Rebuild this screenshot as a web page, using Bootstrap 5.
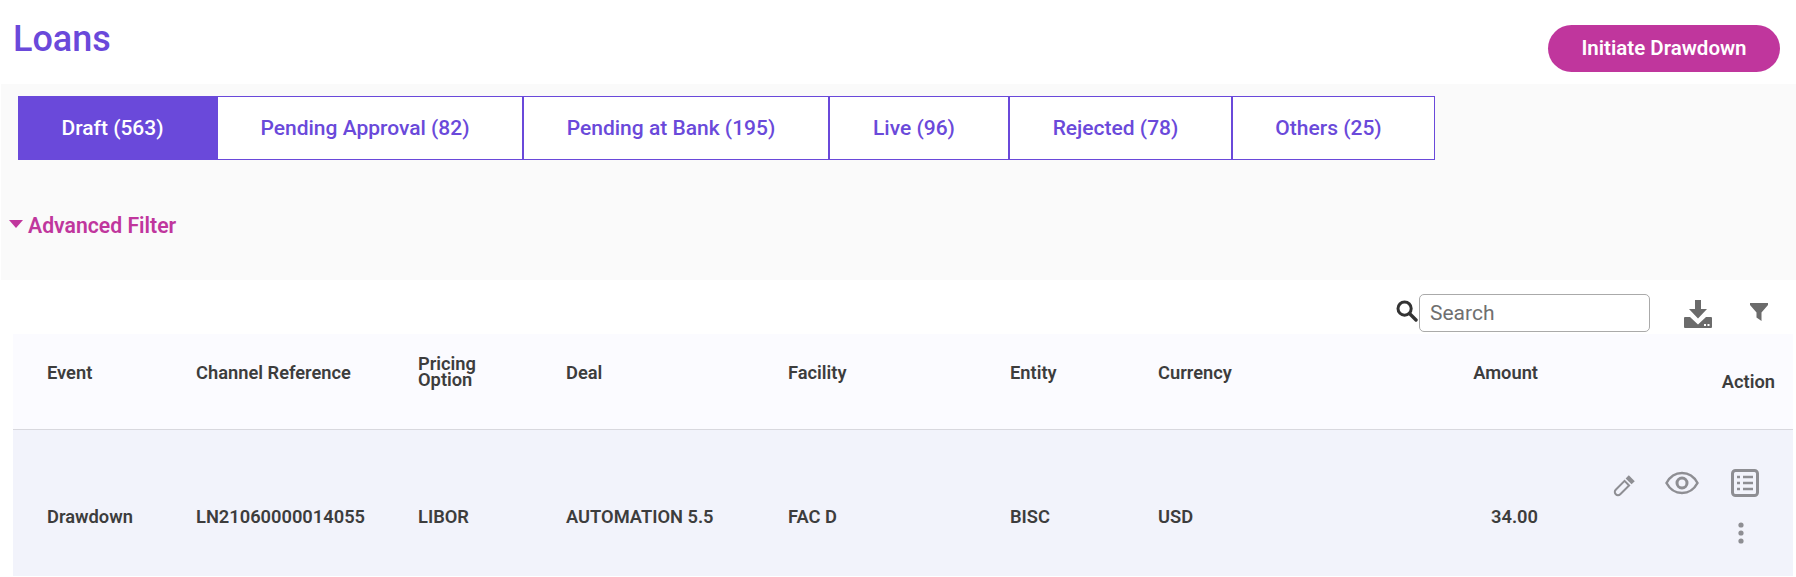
<!DOCTYPE html>
<html lang="en">
<head>
    <meta charset="UTF-8">
    <title>Loans</title>
    <link href="https://cdn.jsdelivr.net/npm/bootstrap@5.3.0/dist/css/bootstrap.min.css" rel="stylesheet">
    <style>
        body {
            font-family: Roboto, "Liberation Sans", sans-serif;
            background-color: #fff;
            color: #3d3d3d;
            height: 577px;
            overflow: hidden;
        }
        .page-head {
            height: 84px;
            padding: 19px 16px 0 13px;
        }
        .page-title {
            color: #6a49da;
            font-size: 36px;
            font-weight: 500;
            line-height: 40px;
            margin: 0;
        }
        .btn-drawdown {
            background-color: #c0369d;
            color: #fff;
            border: 0;
            border-radius: 24px;
            width: 232px;
            height: 47px;
            margin-top: 6px;
            font-size: 20.500px;
            font-weight: 600;
            padding: 0;
        }
        .btn-drawdown:hover { background-color: #c0369d; color: #fff; }
        .filter-band {
            background-color: #fafafa;
            height: 196px;
            margin-left: 1px;
            padding: 12px 0 0 17px;
        }
        .tab-strip { height: 64px; }
        .tab-item {
            display: flex;
            align-items: center;
            justify-content: center;
            height: 64px;
            border: 1px solid #6a49da;
            padding: 2px 10px 0 0;
            background-color: #fff;
            color: #6a49da;
            font-size: 21px;
            font-weight: 500;
            text-decoration: none;
        }
        .tab-item.is-active { background-color: #6a49da; color: #fff; }
        .w-draft { width: 199px; }
        .w-approval { width: 306px; }
        .w-bank { width: 306px; }
        .w-live { width: 180px; }
        .w-rejected { width: 223px; }
        .w-others { width: 203px; }
        .adv-filter {
            margin: 53px 0 0 -9px;
            color: #c0369d;
            font-size: 21.200px;
            font-weight: 600;
            line-height: 26px;
            gap: 5px;
        }
        .adv-caret {
            width: 0;
            height: 0;
            border-left: 7px solid transparent;
            border-right: 7px solid transparent;
            border-top: 8px solid #c0369d;
            margin-top: -4px;
        }
        .tool-row {
            height: 54px;
            padding: 14px 0 0 0;
        }
        .search-box {
            width: 231px;
            height: 38px;
            border: 1px solid #aaa;
            border-radius: 5px;
            padding: 0 10px;
            font-size: 21px;
            color: #3d3d3d;
            background: #fff;
            margin-left: 1px;
        }
        .search-box::placeholder { color: #6f6f6f; }
        .tool-search { margin-top: 6px; }
        .tool-download { margin: 6px 0 0 34px; }
        .tool-filter { margin: 9px 28px 0 38px; }
        .loan-grid {
            table-layout: fixed;
            border-collapse: collapse;
            width: 1780px;
            margin-left: 13px;
        }
        .loan-grid th, .loan-grid td {
            padding: 0;
            vertical-align: middle;
            font-size: 18.300px;
            font-weight: 600;
            color: #3d3d3d;
        }
        .loan-grid thead tr {
            background-color: #fbfbff;
            height: 95px;
            border-bottom: 1px solid #d8d8de;
        }
        .loan-grid tbody tr {
            background-color: #f2f3fb;
            height: 147px;
        }
        .loan-grid th { padding-bottom: 18px; }
        .loan-grid td { padding-top: 28px; }
        .loan-grid th:first-child, .loan-grid td:first-child { padding-left: 34px; }
        .th-tight { line-height: 16px; }
        .loan-grid .th-action { padding-top: 1px; padding-bottom: 0; padding-right: 18px; }
        .loan-grid .cell-actions { vertical-align: top; padding-top: 38px; padding-right: 34px; }
        .icon-line { gap: 29px; }
        .icon-pencil { margin-top: 6px; }
        .icon-eye { margin-right: 3px; }
        .dots-line { margin-top: 23px; padding-right: 4px; }
    </style>
</head>
<body>
    <!-- page title -->
    <div class="page-head d-flex justify-content-between align-items-start">
        <h1 class="page-title">Loans</h1>
        <button class="btn btn-drawdown" type="button">Initiate Drawdown</button>
    </div>

    <!-- tabs and filter -->
    <div class="filter-band">
        <div class="tab-strip d-flex">
            <a class="tab-item w-draft is-active" href="#">Draft (563)</a>
            <a class="tab-item w-approval" href="#">Pending Approval (82)</a>
            <a class="tab-item w-bank" href="#">Pending at Bank (195)</a>
            <a class="tab-item w-live" href="#">Live (96)</a>
            <a class="tab-item w-rejected" href="#">Rejected (78)</a>
            <a class="tab-item w-others" href="#">Others (25)</a>
        </div>
        <div class="adv-filter d-flex align-items-center">
            <span class="adv-caret"></span>
            <span>Advanced Filter</span>
        </div>
    </div>

    <!-- search and tools -->
    <div class="tool-row d-flex justify-content-end align-items-start">
        <svg class="tool-search" width="22" height="22" viewBox="0 0 22 22" fill="none" stroke="#333" aria-hidden="true">
            <circle cx="8.6" cy="8.6" r="6.6" stroke-width="3"/>
            <path d="M13.5 13.5 20 20" stroke-width="3.4" stroke-linecap="round"/>
        </svg>
        <input class="search-box" type="text" placeholder="Search">
        <svg class="tool-download" width="28" height="28" viewBox="0 0 28 28" fill="#6b6b6b" aria-hidden="true">
            <path d="M11 0h6v9h6l-9 9.500L5 9h6z"/>
            <path d="M1 17h5l8 7.500 8-7.500h5a1 1 0 0 1 1 1v9a1 1 0 0 1-1 1H1a1 1 0 0 1-1-1v-9a1 1 0 0 1 1-1z"/>
            <rect x="20" y="24" width="2" height="2" fill="#fff"/>
            <rect x="23.500" y="24" width="2" height="2" fill="#fff"/>
        </svg>
        <svg class="tool-filter" width="18" height="18" viewBox="0 0 18 18" fill="#6b6b6b" aria-hidden="true">
            <path d="M0 0h18v2L11.500 9.500V18L6.500 14.500V9.500L0 2z"/>
        </svg>
    </div>

    <!-- loans table -->
    <table class="loan-grid">
        <colgroup>
            <col style="width:183px"><col style="width:222px"><col style="width:148px"><col style="width:222px">
            <col style="width:222px"><col style="width:148px"><col style="width:170px"><col style="width:210px"><col>
        </colgroup>
        <thead>
            <tr>
                <th>Event</th>
                <th>Channel Reference</th>
                <th class="th-tight">Pricing<br>Option</th>
                <th>Deal</th>
                <th>Facility</th>
                <th>Entity</th>
                <th>Currency</th>
                <th class="text-end">Amount</th>
                <th class="text-end th-action">Action</th>
            </tr>
        </thead>
        <tbody>
            <tr>
                <td>Drawdown</td>
                <td>LN21060000014055</td>
                <td>LIBOR</td>
                <td>AUTOMATION 5.5</td>
                <td>FAC D</td>
                <td>BISC</td>
                <td>USD</td>
                <td class="text-end">34.00</td>
                <td class="cell-actions">
                    <div class="icon-line d-flex justify-content-end align-items-center">
                        <svg class="icon-pencil" width="24" height="24" viewBox="0 0 24 24" fill="none" stroke="#8e8e93" aria-hidden="true">
                            <g transform="rotate(45 12 12)">
                                <path d="M8.800 8h6.400v12.500a3.200 3.200 0 0 1-6.400 0z" stroke-width="2"/>
                                <rect x="7.800" y="1" width="8.400" height="4.500" fill="#8e8e93" stroke="none"/>
                            </g>
                        </svg>
                        <svg class="icon-eye" width="34" height="24" viewBox="0 0 34 24" fill="none" stroke="#8e8e93" aria-hidden="true">
                            <path d="M1.500 12C5 5.500 10.500 2 17 2s12 3.500 15.500 10C29 18.500 23.500 22 17 22S5 18.500 1.500 12z" stroke-width="2.500"/>
                            <circle cx="17" cy="12" r="5" stroke-width="3"/>
                        </svg>
                        <svg width="28" height="28" viewBox="0 0 28 28" fill="none" stroke="#8e8e93" aria-hidden="true">
                            <rect x="1.500" y="1.500" width="25" height="25" rx="3" stroke-width="3"/>
                            <path d="M12 8h10M12 14h10M12 20h10" stroke-width="2.600"/>
                            <path d="M6 8h3M6 14h3M6 20h3" stroke-width="2.600"/>
                        </svg>
                    </div>
                    <div class="dots-line d-flex justify-content-end">
                        <svg width="28" height="24" viewBox="0 0 28 24" fill="#8e8e93" aria-hidden="true">
                            <circle cx="14" cy="4" r="2.600"/>
                            <circle cx="14" cy="12" r="2.600"/>
                            <circle cx="14" cy="20" r="2.600"/>
                        </svg>
                    </div>
                </td>
            </tr>
        </tbody>
    </table>

    <script src="https://cdn.jsdelivr.net/npm/bootstrap@5.3.0/dist/js/bootstrap.bundle.min.js"></script>
</body>
</html>
